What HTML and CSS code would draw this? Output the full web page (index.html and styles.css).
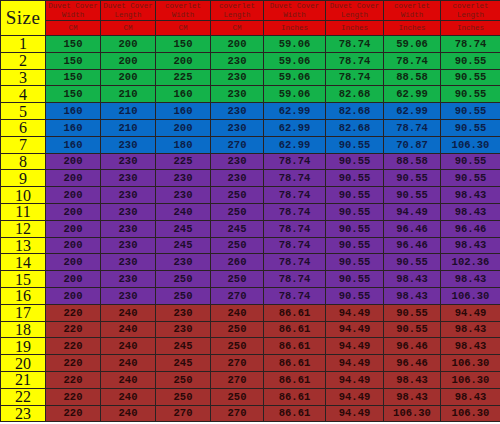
FILE: index.html
```html
<!DOCTYPE html>
<html>
<head>
<meta charset="utf-8">
<link rel="stylesheet" href="styles.css">
</head>
<body>
<table class="sizes">
<colgroup>
<col class="c0"><col class="c1"><col class="c2"><col class="c3"><col class="c4"><col class="c5"><col class="c6"><col class="c7"><col class="c8">
</colgroup>
<thead>
<tr class="h1">
<th class="size" rowspan="2">Size</th>
<th>Duvet Cover<br>Width</th><th>Duvet Cover<br>Length</th><th>coverlet<br>Width</th><th>coverlet<br>Length</th>
<th>Duvet Cover<br>Width</th><th>Duvet Cover<br>Length</th><th>coverlet<br>Width</th><th>coverlet<br>Length</th>
</tr>
<tr class="h2">
<th>CM</th><th>CM</th><th>CM</th><th>CM</th><th>Inches</th><th>Inches</th><th>Inches</th><th>Inches</th>
</tr>
</thead>
<tbody>
<tr class="green"><th>1</th><td>150</td><td>200</td><td>150</td><td>200</td><td>59.06</td><td>78.74</td><td>59.06</td><td>78.74</td></tr>
<tr class="green"><th>2</th><td>150</td><td>200</td><td>200</td><td>230</td><td>59.06</td><td>78.74</td><td>78.74</td><td>90.55</td></tr>
<tr class="green"><th>3</th><td>150</td><td>200</td><td>225</td><td>230</td><td>59.06</td><td>78.74</td><td>88.58</td><td>90.55</td></tr>
<tr class="green"><th>4</th><td>150</td><td>210</td><td>160</td><td>230</td><td>59.06</td><td>82.68</td><td>62.99</td><td>90.55</td></tr>
<tr class="blue"><th>5</th><td>160</td><td>210</td><td>160</td><td>230</td><td>62.99</td><td>82.68</td><td>62.99</td><td>90.55</td></tr>
<tr class="blue"><th>6</th><td>160</td><td>210</td><td>200</td><td>230</td><td>62.99</td><td>82.68</td><td>78.74</td><td>90.55</td></tr>
<tr class="blue"><th>7</th><td>160</td><td>230</td><td>180</td><td>270</td><td>62.99</td><td>90.55</td><td>70.87</td><td>106.30</td></tr>
<tr class="purple"><th>8</th><td>200</td><td>230</td><td>225</td><td>230</td><td>78.74</td><td>90.55</td><td>88.58</td><td>90.55</td></tr>
<tr class="purple"><th>9</th><td>200</td><td>230</td><td>230</td><td>230</td><td>78.74</td><td>90.55</td><td>90.55</td><td>90.55</td></tr>
<tr class="purple"><th>10</th><td>200</td><td>230</td><td>230</td><td>250</td><td>78.74</td><td>90.55</td><td>90.55</td><td>98.43</td></tr>
<tr class="purple"><th>11</th><td>200</td><td>230</td><td>240</td><td>250</td><td>78.74</td><td>90.55</td><td>94.49</td><td>98.43</td></tr>
<tr class="purple"><th>12</th><td>200</td><td>230</td><td>245</td><td>245</td><td>78.74</td><td>90.55</td><td>96.46</td><td>96.46</td></tr>
<tr class="purple"><th>13</th><td>200</td><td>230</td><td>245</td><td>250</td><td>78.74</td><td>90.55</td><td>96.46</td><td>98.43</td></tr>
<tr class="purple"><th>14</th><td>200</td><td>230</td><td>230</td><td>260</td><td>78.74</td><td>90.55</td><td>90.55</td><td>102.36</td></tr>
<tr class="purple"><th>15</th><td>200</td><td>230</td><td>250</td><td>250</td><td>78.74</td><td>90.55</td><td>98.43</td><td>98.43</td></tr>
<tr class="purple"><th>16</th><td>200</td><td>230</td><td>250</td><td>270</td><td>78.74</td><td>90.55</td><td>98.43</td><td>106.30</td></tr>
<tr class="brown"><th>17</th><td>220</td><td>240</td><td>230</td><td>240</td><td>86.61</td><td>94.49</td><td>90.55</td><td>94.49</td></tr>
<tr class="brown"><th>18</th><td>220</td><td>240</td><td>230</td><td>250</td><td>86.61</td><td>94.49</td><td>90.55</td><td>98.43</td></tr>
<tr class="brown"><th>19</th><td>220</td><td>240</td><td>245</td><td>250</td><td>86.61</td><td>94.49</td><td>96.46</td><td>98.43</td></tr>
<tr class="brown"><th>20</th><td>220</td><td>240</td><td>245</td><td>270</td><td>86.61</td><td>94.49</td><td>96.46</td><td>106.30</td></tr>
<tr class="brown"><th>21</th><td>220</td><td>240</td><td>250</td><td>270</td><td>86.61</td><td>94.49</td><td>98.43</td><td>106.30</td></tr>
<tr class="brown"><th>22</th><td>220</td><td>240</td><td>250</td><td>250</td><td>86.61</td><td>94.49</td><td>98.43</td><td>98.43</td></tr>
<tr class="brown"><th>23</th><td>220</td><td>240</td><td>270</td><td>270</td><td>86.61</td><td>94.49</td><td>106.30</td><td>106.30</td></tr>
</tbody>
</table>
</body>
</html>
```
FILE: styles.css
```css
html, body {
  margin: 0;
  padding: 0;
  background: #ffffff;
}
.sizes {
  width: 500px;
  border-collapse: collapse;
  table-layout: fixed;
}
.c0 { width: 45px; }
.c1 { width: 55px; }
.c2 { width: 55px; }
.c3 { width: 55px; }
.c4 { width: 53px; }
.c5 { width: 62px; }
.c6 { width: 58px; }
.c7 { width: 57px; }
.c8 { width: 60px; }
.sizes th, .sizes td {
  border: 1px solid #2a2222;
  padding: 0;
  text-align: center;
  vertical-align: middle;
  white-space: nowrap;
}
.h1 th, .h2 th {
  background: #dd0606;
  color: #761810;
  font-family: "Liberation Mono", monospace;
  font-size: 7.5px;
  font-weight: normal;
  line-height: 9px;
}
.h1 th { height: 19px; }
.h2 th { height: 14px; }
.sizes th.size {
  background: #ffff00;
  color: #1a1a1a;
  font-family: "Liberation Serif", serif;
  font-size: 19px;
  line-height: 20px;
  letter-spacing: 0.5px;
}
tbody th {
  background: #ffff00;
  color: #111111;
  font-family: "Liberation Serif", serif;
  font-size: 16px;
  font-weight: normal;
  height: 15.8px;
  line-height: 15px;
}
tbody td {
  font-family: "Liberation Mono", monospace;
  font-size: 10.5px;
  font-weight: bold;
  line-height: 14px;
  color: #161616;
}
.green td { background: #14b24a; color: #0e2a12; }
.blue td { background: #0a6cc8; color: #0c1e48; }
.purple td { background: #7030a0; color: #1e0c2c; }
.brown td { background: #a2302e; color: #2a0808; }
```
